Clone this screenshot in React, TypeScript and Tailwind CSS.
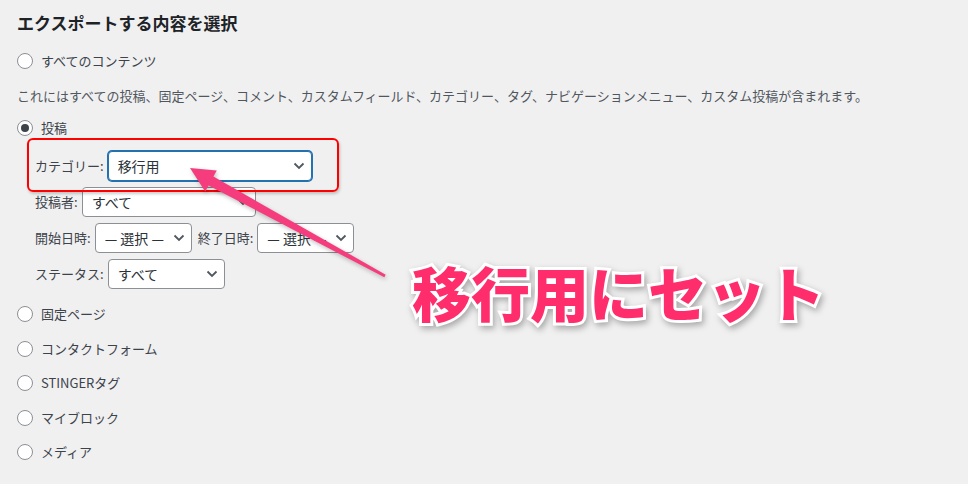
import React from "react";

const font = { fontFamily: '"Noto Sans CJK JP", "Noto Sans", sans-serif' };

function Chevron() {
  return (
    <svg width="12" height="8" viewBox="0 0 12 8" className="shrink-0">
      <path d="M1.5 1.5 L6 6 L10.5 1.5" fill="none" stroke="#50575e" strokeWidth="1.8" />
    </svg>
  );
}

function Select({ value, width, focused }: { value: string; width: string; focused?: boolean }) {
  return (
    <div
      className={`flex h-[30px] items-center justify-between rounded-[4px] bg-white pl-[9px] pr-[6px] text-[14px] text-[#2c3338] ${width} ${
        focused ? "border border-[#2271b1] shadow-[0_0_0_1px_#2271b1]" : "border border-[#8c8f94]"
      }`}
    >
      <span className="whitespace-nowrap">{value}</span>
      <Chevron />
    </div>
  );
}

function Radio({ label, checked }: { label: string; checked?: boolean }) {
  return (
    <div className="flex h-5 items-center gap-2">
      <span className="flex h-4 w-4 items-center justify-center rounded-full border border-[#8c8f94] bg-white">
        {checked && <span className="h-2 w-2 rounded-full bg-[#3c434a]" />}
      </span>
      <span className="text-[13px] text-[#3c434a]">{label}</span>
    </div>
  );
}

function Field({ label, children }: { label: string; children: React.ReactNode }) {
  return (
    <div className="flex items-center gap-1">
      <span className="whitespace-nowrap text-[13px] text-[#3c434a]">{label}</span>
      {children}
    </div>
  );
}

export default function App() {
  return (
    <div className="relative h-[484px] w-[968px] overflow-hidden bg-[#f0f0f1]" style={font}>
      <div className="flex flex-col pl-[17px] pt-[11px]">
        <h2 className="text-[17px] leading-6 font-bold text-[#1d2327]">エクスポートする内容を選択</h2>

        <div className="mt-4">
          <Radio label="すべてのコンテンツ" />
        </div>
        <p className="mt-[15px] whitespace-nowrap text-[13px] leading-5 text-[#50575e]">
          これにはすべての投稿、固定ページ、コメント、カスタムフィールド、カテゴリー、タグ、ナビゲーションメニュー、カスタム投稿が含まれます。
        </p>

        <div className="mt-3">
          <Radio label="投稿" checked />
        </div>

        <div className="relative ml-[18px] mt-[13px] flex flex-col gap-[6px]">
          <Field label="カテゴリー:">
            <Select value="移行用" width="w-[204px]" focused />
          </Field>
          <Field label="投稿者:">
            <Select value="すべて" width="w-[174px]" />
          </Field>
          <div className="flex items-center gap-[6px]">
            <Field label="開始日時:">
              <Select value="— 選択 —" width="w-[97px]" />
            </Field>
            <Field label="終了日時:">
              <Select value="— 選択 —" width="w-[97px]" />
            </Field>
          </div>
          <Field label="ステータス:">
            <Select value="すべて" width="w-[117px]" />
          </Field>
          {/* highlight box */}
          <div className="pointer-events-none absolute left-[-8px] top-[-13px] h-[54px] w-[312px] rounded-[6px] border-2 border-[#ff0000] shadow-[1px_2px_3px_rgba(0,0,0,0.2)]" />
        </div>

        <div className="mt-[15px] flex flex-col gap-[14.5px]">
          <Radio label="固定ページ" />
          <Radio label="コンタクトフォーム" />
          <Radio label="STINGERタグ" />
          <Radio label="マイブロック" />
          <Radio label="メディア" />
        </div>
      </div>

      {/* annotation arrow */}
      <svg
        className="pointer-events-none absolute left-0 top-0 [filter:drop-shadow(1px_2px_2px_rgba(0,0,0,0.25))]"
        width="968"
        height="484"
      >
        <polygon
          points="190,168 216.8,170.5 213.4,176.6 385.7,274.7 384.3,277.3 208.6,185.4 205.2,191.5"
          fill="#f53d7d"
        />
      </svg>

      <div className="pointer-events-none absolute left-[412px] top-[262px] whitespace-nowrap text-[59px] leading-none font-black text-[#ff2d6b] [-webkit-text-stroke:6px_white] [paint-order:stroke_fill] [filter:drop-shadow(2px_3px_3px_rgba(0,0,0,0.3))]">
        移行用にセット
      </div>
    </div>
  );
}
